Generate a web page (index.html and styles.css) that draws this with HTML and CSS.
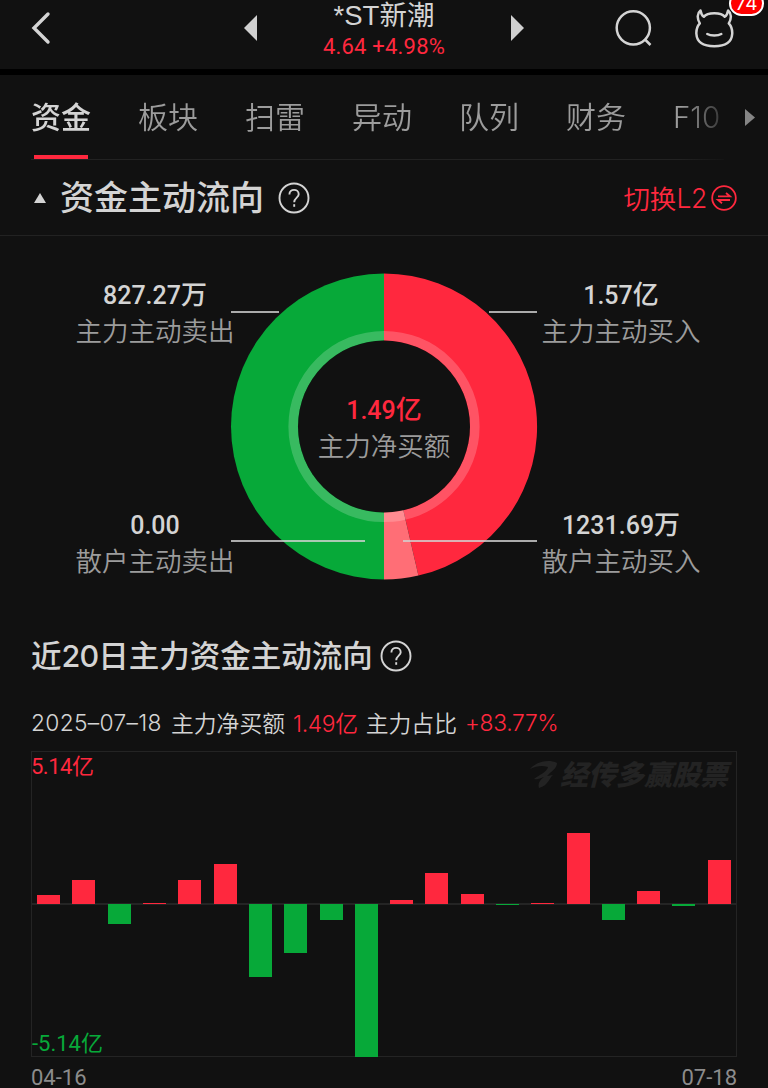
FILE: index.html
```html
<!DOCTYPE html>
<html lang="zh-CN">

<head>
  <meta charset="UTF-8">
  <meta name="viewport" content="width=device-width, initial-scale=1.0">
  <title>*ST新潮</title>
  <link rel="stylesheet" href="styles.css">
</head>

<body>

  <header class="topbar">
    <svg class="icon-back" width="20" height="34" viewBox="0 0 20 34">
      <path d="M17 3 L3 17 L17 31" />
    </svg>

    <div class="stock">
      <svg class="arrow" width="13" height="26" viewBox="0 0 13 26">
        <path d="M13 0 V26 L0 13 Z" />
      </svg>
      <div class="stock-info">
        <div class="stock-name">*ST新潮</div>
        <div class="stock-price">4.64 +4.98%</div>
      </div>
      <svg class="arrow" width="13" height="26" viewBox="0 0 13 26">
        <path d="M0 0 V26 L13 13 Z" />
      </svg>
    </div>

    <div class="actions">
      <svg class="icon-line" width="40" height="40" viewBox="0 0 40 40">
        <circle cx="19.3" cy="18.8" r="16.6" />
        <path d="M30.5 30 L36.5 36" />
      </svg>
      <div class="robot">
        <svg class="icon-line" width="40" height="40" viewBox="0 0 40 40">
          <path d="M5.500 1.500 C2.200 4 1.800 9.500 4.800 14.300 C1.500 18 1.200 22 1.400 25 C1.900 33 8 37.200 19.300 37.200 C30.600 37.200 36.700 33 37.200 25 C37.400 22 37.100 18 33.800 14.300 C36.800 9.500 36.400 4 33.100 1.500 C32.600 4.500 31.600 6.500 29.700 7.800 C27.500 4.800 24 4.300 19.300 4.300 C14.600 4.300 11.100 4.800 8.900 7.800 C7 6.500 6 4.500 5.500 1.500 Z" />
          <path d="M12.300 25 C15.500 26.900 23 26.900 26.300 25" />
        </svg>
        <span class="badge">74</span>
      </div>
    </div>
  </header>

  <nav class="tabs">
    <div class="tab-list">
      <a class="tab active">资金</a>
      <a class="tab">板块</a>
      <a class="tab">扫雷</a>
      <a class="tab">异动</a>
      <a class="tab">队列</a>
      <a class="tab">财务</a>
      <a class="tab">F10</a>
    </div>
    <svg class="tab-more" width="10" height="17" viewBox="0 0 10 17">
      <path d="M0 0 V17 L10 8.500 Z" />
    </svg>
  </nav>

  <section class="flow">
    <div class="flow-head">
      <svg class="fold" width="12" height="10" viewBox="0 0 12 10">
        <path d="M6 0 L12 10 H0 Z" />
      </svg>
      <h2>资金主动流向</h2>
      <svg class="icon-help" width="32" height="32" viewBox="0 0 32 32">
        <circle cx="16" cy="16" r="14.500" />
        <path d="M11.400 12.500 C11.400 6.300 20.700 6.500 20.700 12.300 C20.700 15.600 16.200 15.800 16.200 20.300" />
        <path d="M16.200 22.200 V24.800" />
      </svg>
      <a class="switch">
        切换<span>L2</span>
        <svg width="26" height="26" viewBox="0 0 26 26">
          <circle cx="13" cy="13" r="11.800" />
          <path d="M7 11.300 H19 L15 8 M19 15 H7 L11 18.300" />
        </svg>
      </a>
    </div>

    <div class="donut-row">
      <div class="labels left">
        <div class="label">
          <div class="value">827.27<b>万</b></div>
          <div class="name">主力主动卖出</div>
        </div>
        <div class="label">
          <div class="value">0.00</div>
          <div class="name">散户主动卖出</div>
        </div>
      </div>

      <div class="donut">
        <svg width="306" height="306" viewBox="-153 -152.500 306 306">
          <path fill="#07a939" d="M0 -153 A153 153 0 0 0 0 153 Z" />
          <path fill="#ff283e" d="M0 -153 A153 153 0 0 1 34.400 149.100 L0 0 Z" />
          <path fill="#ff6e76" d="M34.400 149.100 A153 153 0 0 1 0 153 L0 0 Z" />
          <circle r="90.800" fill="none" stroke="#fff" stroke-opacity="0.2" stroke-width="9.600" />
          <circle r="86" fill="#111" />
          <path stroke="#d2d2d2" stroke-opacity="0.8" stroke-width="2.200" d="M-153 -114.500 H-105 M105 -114.500 H153 M-153 114.500 H-19 M19 114.500 H153" />
        </svg>
        <div class="donut-center">
          <div class="value">1.49<b>亿</b></div>
          <div class="name">主力净买额</div>
        </div>
      </div>

      <div class="labels right">
        <div class="label">
          <div class="value">1.57<b>亿</b></div>
          <div class="name">主力主动买入</div>
        </div>
        <div class="label">
          <div class="value">1231.69<b>万</b></div>
          <div class="name">散户主动买入</div>
        </div>
      </div>
    </div>
  </section>

  <section class="history">
    <div class="history-head">
      <h3>近<span>20</span>日主力资金主动流向</h3>
      <svg class="icon-help" width="32" height="32" viewBox="0 0 32 32">
        <circle cx="16" cy="16" r="14.500" />
        <path d="M11.400 12.500 C11.400 6.300 20.700 6.500 20.700 12.300 C20.700 15.600 16.200 15.800 16.200 20.300" />
        <path d="M16.200 22.200 V24.800" />
      </svg>
    </div>

    <div class="summary">
      <span class="date">2025–07–18</span>
      <span>主力净买额</span>
      <span class="up-text amount">1.49亿</span>
      <span>主力占比</span>
      <span class="up-text ratio">+83.77%</span>
    </div>

    <div class="chart">
      <div class="watermark">
        <svg width="30" height="28" viewBox="0 0 30 28">
          <path d="M0 8 C7 0 19 -2 27 2 C27 7 22 10 19 13 L17 15 L23 14 C19 17 19 24 9 27 C7.500 22 10 19 14 16 C10 17 8 19 4 18 C9 14 17 11 18 6 C12 4 6 5 0 8 Z" />
        </svg>
        <span>经传多赢股票</span>
      </div>
      <span class="axis-max">5.14亿</span>
      <span class="axis-min">-5.14亿</span>

      <div class="bars">
        <div class="slot"><i class="up" style="height: 6%"></i></div>
        <div class="slot"><i class="up" style="height: 15.500%"></i></div>
        <div class="slot"><i class="down" style="height: 13.300%"></i></div>
        <div class="slot"><i class="up" style="height: 0.600%"></i></div>
        <div class="slot"><i class="up" style="height: 16%"></i></div>
        <div class="slot"><i class="up" style="height: 26.300%"></i></div>
        <div class="slot"><i class="down" style="height: 47.700%"></i></div>
        <div class="slot"><i class="down" style="height: 32.200%"></i></div>
        <div class="slot"><i class="down" style="height: 10.600%"></i></div>
        <div class="slot"><i class="down" style="height: 100.600%"></i></div>
        <div class="slot"><i class="up" style="height: 2.800%"></i></div>
        <div class="slot"><i class="up" style="height: 20.200%"></i></div>
        <div class="slot"><i class="up" style="height: 6.900%"></i></div>
        <div class="slot"><i class="down" style="height: 0.900%"></i></div>
        <div class="slot"><i class="up" style="height: 0.600%"></i></div>
        <div class="slot"><i class="up" style="height: 46.700%"></i></div>
        <div class="slot"><i class="down" style="height: 10.500%"></i></div>
        <div class="slot"><i class="up" style="height: 8.500%"></i></div>
        <div class="slot"><i class="down" style="height: 1.200%"></i></div>
        <div class="slot"><i class="up" style="height: 29.200%"></i></div>
      </div>
    </div>

    <div class="dates">
      <span>04-16</span>
      <span>07-18</span>
    </div>
  </section>

</body>

</html>
```

FILE: styles.css
```css
* {
  margin: 0;
  padding: 0;
  box-sizing: border-box;
}

body {
  width: 768px;
  height: 1088px;
  overflow: hidden;
  background: #111;
  color: #d4d4d4;
  font-family: Inter, "Noto Sans CJK SC", sans-serif;
  white-space: nowrap;
}

svg {
  display: block;
  flex: none;
}

/* top bar */
.topbar {
  height: 75px;
  padding: 0 33px 0 31px;
  border-bottom: 6px solid #000;
  display: grid;
  grid-template-columns: 120px 1fr 120px;
}

.icon-back {
  margin-top: 11px;
  fill: none;
  stroke: #d4d4d4;
  stroke-width: 3.4;
  stroke-linecap: round;
}

.stock {
  display: flex;
  justify-content: center;
  gap: 58px;
  padding-left: 2px;
}

.arrow {
  margin-top: 15px;
  fill: #d0d0d0;
}

.stock-info {
  width: 138px;
  text-align: center;
}

.stock-name {
  height: 31px;
  font-family: "Liberation Sans", "Noto Sans CJK SC", sans-serif;
  font-size: 27.5px;
  line-height: 31px;
}

.stock-price {
  color: #ff283e;
  font-family: Roboto, sans-serif;
  font-size: 22px;
  line-height: 32px;
  letter-spacing: 0.2px;
}

.actions {
  display: flex;
  justify-content: flex-end;
  gap: 41px;
  padding-top: 9px;
}

.icon-line {
  fill: none;
  stroke: #d4d4d4;
  stroke-width: 2.5;
  stroke-linejoin: round;
}

.robot {
  position: relative;
}

.robot .icon-line path:last-child {
  stroke-linecap: round;
}

.badge {
  position: absolute;
  left: 34px;
  top: -18px;
  width: 35px;
  height: 25px;
  border: 2px solid #fff;
  border-radius: 13px;
  background: #f00;
  color: #fff;
  font-size: 19px;
  line-height: 21px;
  text-align: center;
}

/* tabs */
.tabs {
  height: 85px;
  padding: 0 13px 0 31px;
  display: flex;
  align-items: center;
}

.tab-list {
  width: 693px;
  height: 85px;
  display: flex;
  gap: 47px;
  border-bottom: 1px solid #222;
  -webkit-mask-image: linear-gradient(to right, #000 650px, transparent 706px);
  mask-image: linear-gradient(to right, #000 650px, transparent 706px);
}

.tab {
  height: 84px;
  color: #9c9c9c;
  font-size: 30px;
  font-weight: 350;
  line-height: 84px;
}

.tab:last-child {
  font-size: 29.5px;
}

.tab.active {
  color: #d4d4d4;
  font-weight: 500;
  background: linear-gradient(#ff283e, #ff283e) center bottom / 54px 4px no-repeat;
}

.tab-more {
  margin-left: 21px;
  fill: #858585;
}

/* active flow */
.flow-head {
  height: 76px;
  padding: 0 31px 0 34px;
  border-bottom: 1px solid #222;
  display: flex;
  align-items: center;
}

.fold {
  fill: #d4d4d4;
}

h2 {
  margin: 0 14px;
  font-size: 34px;
  font-weight: 500;
  line-height: 50px;
}

.icon-help {
  fill: none;
  stroke: #d4d4d4;
  stroke-width: 1.9;
}

.switch {
  margin-left: auto;
  display: flex;
  align-items: center;
  color: #ff283e;
  font-size: 26.5px;
  font-weight: 350;
}

.switch span {
  margin-right: 4px;
  letter-spacing: -0.3px;
}

.switch svg {
  fill: none;
  stroke: #ff283e;
  stroke-width: 1.8;
}

.donut-row {
  height: 382px;
  padding-top: 38px;
  display: grid;
  grid-template-columns: 231px 306px 231px;
}

.labels {
  height: 306px;
  display: flex;
  flex-direction: column;
  gap: 157px;
}

.labels.left {
  padding-left: 79px;
}

.labels.right {
  padding-right: 63px;
}

.label {
  height: 73px;
  display: flex;
  flex-direction: column;
  align-items: center;
}

.value {
  height: 41px;
  font-family: Roboto, "Noto Sans CJK SC", sans-serif;
  font-size: 25px;
  font-weight: 500;
  line-height: 43px;
}

.value b {
  font-size: 26px;
  font-weight: 500;
}

.name {
  color: #9c9c9c;
  font-size: 26.5px;
  font-weight: 350;
  line-height: 32px;
}

.donut {
  display: grid;
}

.donut > * {
  grid-area: 1 / 1;
}

.donut svg {
  overflow: visible;
}

.donut-center {
  padding-top: 115px;
  text-align: center;
}

.donut-center .value {
  color: #ff283e;
}

/* last 20 days */
.history {
  padding: 0 31px;
}

.history-head {
  height: 75px;
  display: flex;
  align-items: center;
}

h3 {
  margin-right: 7px;
  font-size: 30.5px;
  font-weight: 500;
  line-height: 40px;
}

h3 span {
  letter-spacing: -0.9px;
}

.summary {
  height: 58px;
  display: flex;
  align-items: center;
  gap: 8px;
  font-size: 22.8px;
  font-weight: 350;
}

.date,
.amount,
.ratio {
  font-size: 22.8px;
  letter-spacing: -0.3px;
}

.date {
  width: 132px;
  letter-spacing: 0.3px;
}

.up-text {
  color: #ff283e;
}

.chart {
  position: relative;
  height: 306px;
  border: 1px solid #242424;
  background: linear-gradient(#242424, #242424) center / 100% 2px no-repeat;
}

.bars {
  height: 100%;
  margin: 0 -1px;
  display: flex;
}

.slot {
  flex: 1;
  display: grid;
  grid-template-rows: 1fr 1fr;
  justify-content: center;
}

.slot i {
  width: 23px;
}

.slot .up {
  grid-row: 1;
  align-self: end;
  background: #ff283e;
}

.slot .down {
  grid-row: 2;
  background: #07a939;
}

.axis-max,
.axis-min {
  position: absolute;
  left: 0;
  font-family: Roboto, "Noto Sans CJK SC", sans-serif;
  font-size: 22px;
  line-height: 28px;
}

.axis-max {
  left: -1px;
  top: 1px;
  color: #ff283e;
  letter-spacing: -0.5px;
}

.axis-min {
  bottom: -2px;
  color: #07a939;
}

.watermark {
  position: absolute;
  top: 8px;
  right: 8px;
  display: flex;
  align-items: center;
  color: #232323;
  font-size: 28px;
  font-style: italic;
  font-weight: 900;
  line-height: 30px;
}

.watermark svg {
  fill: #232323;
}

.dates {
  display: flex;
  justify-content: space-between;
  color: #8c8c8c;
  font-family: Roboto, sans-serif;
  font-size: 22px;
  line-height: 41px;
}
```
